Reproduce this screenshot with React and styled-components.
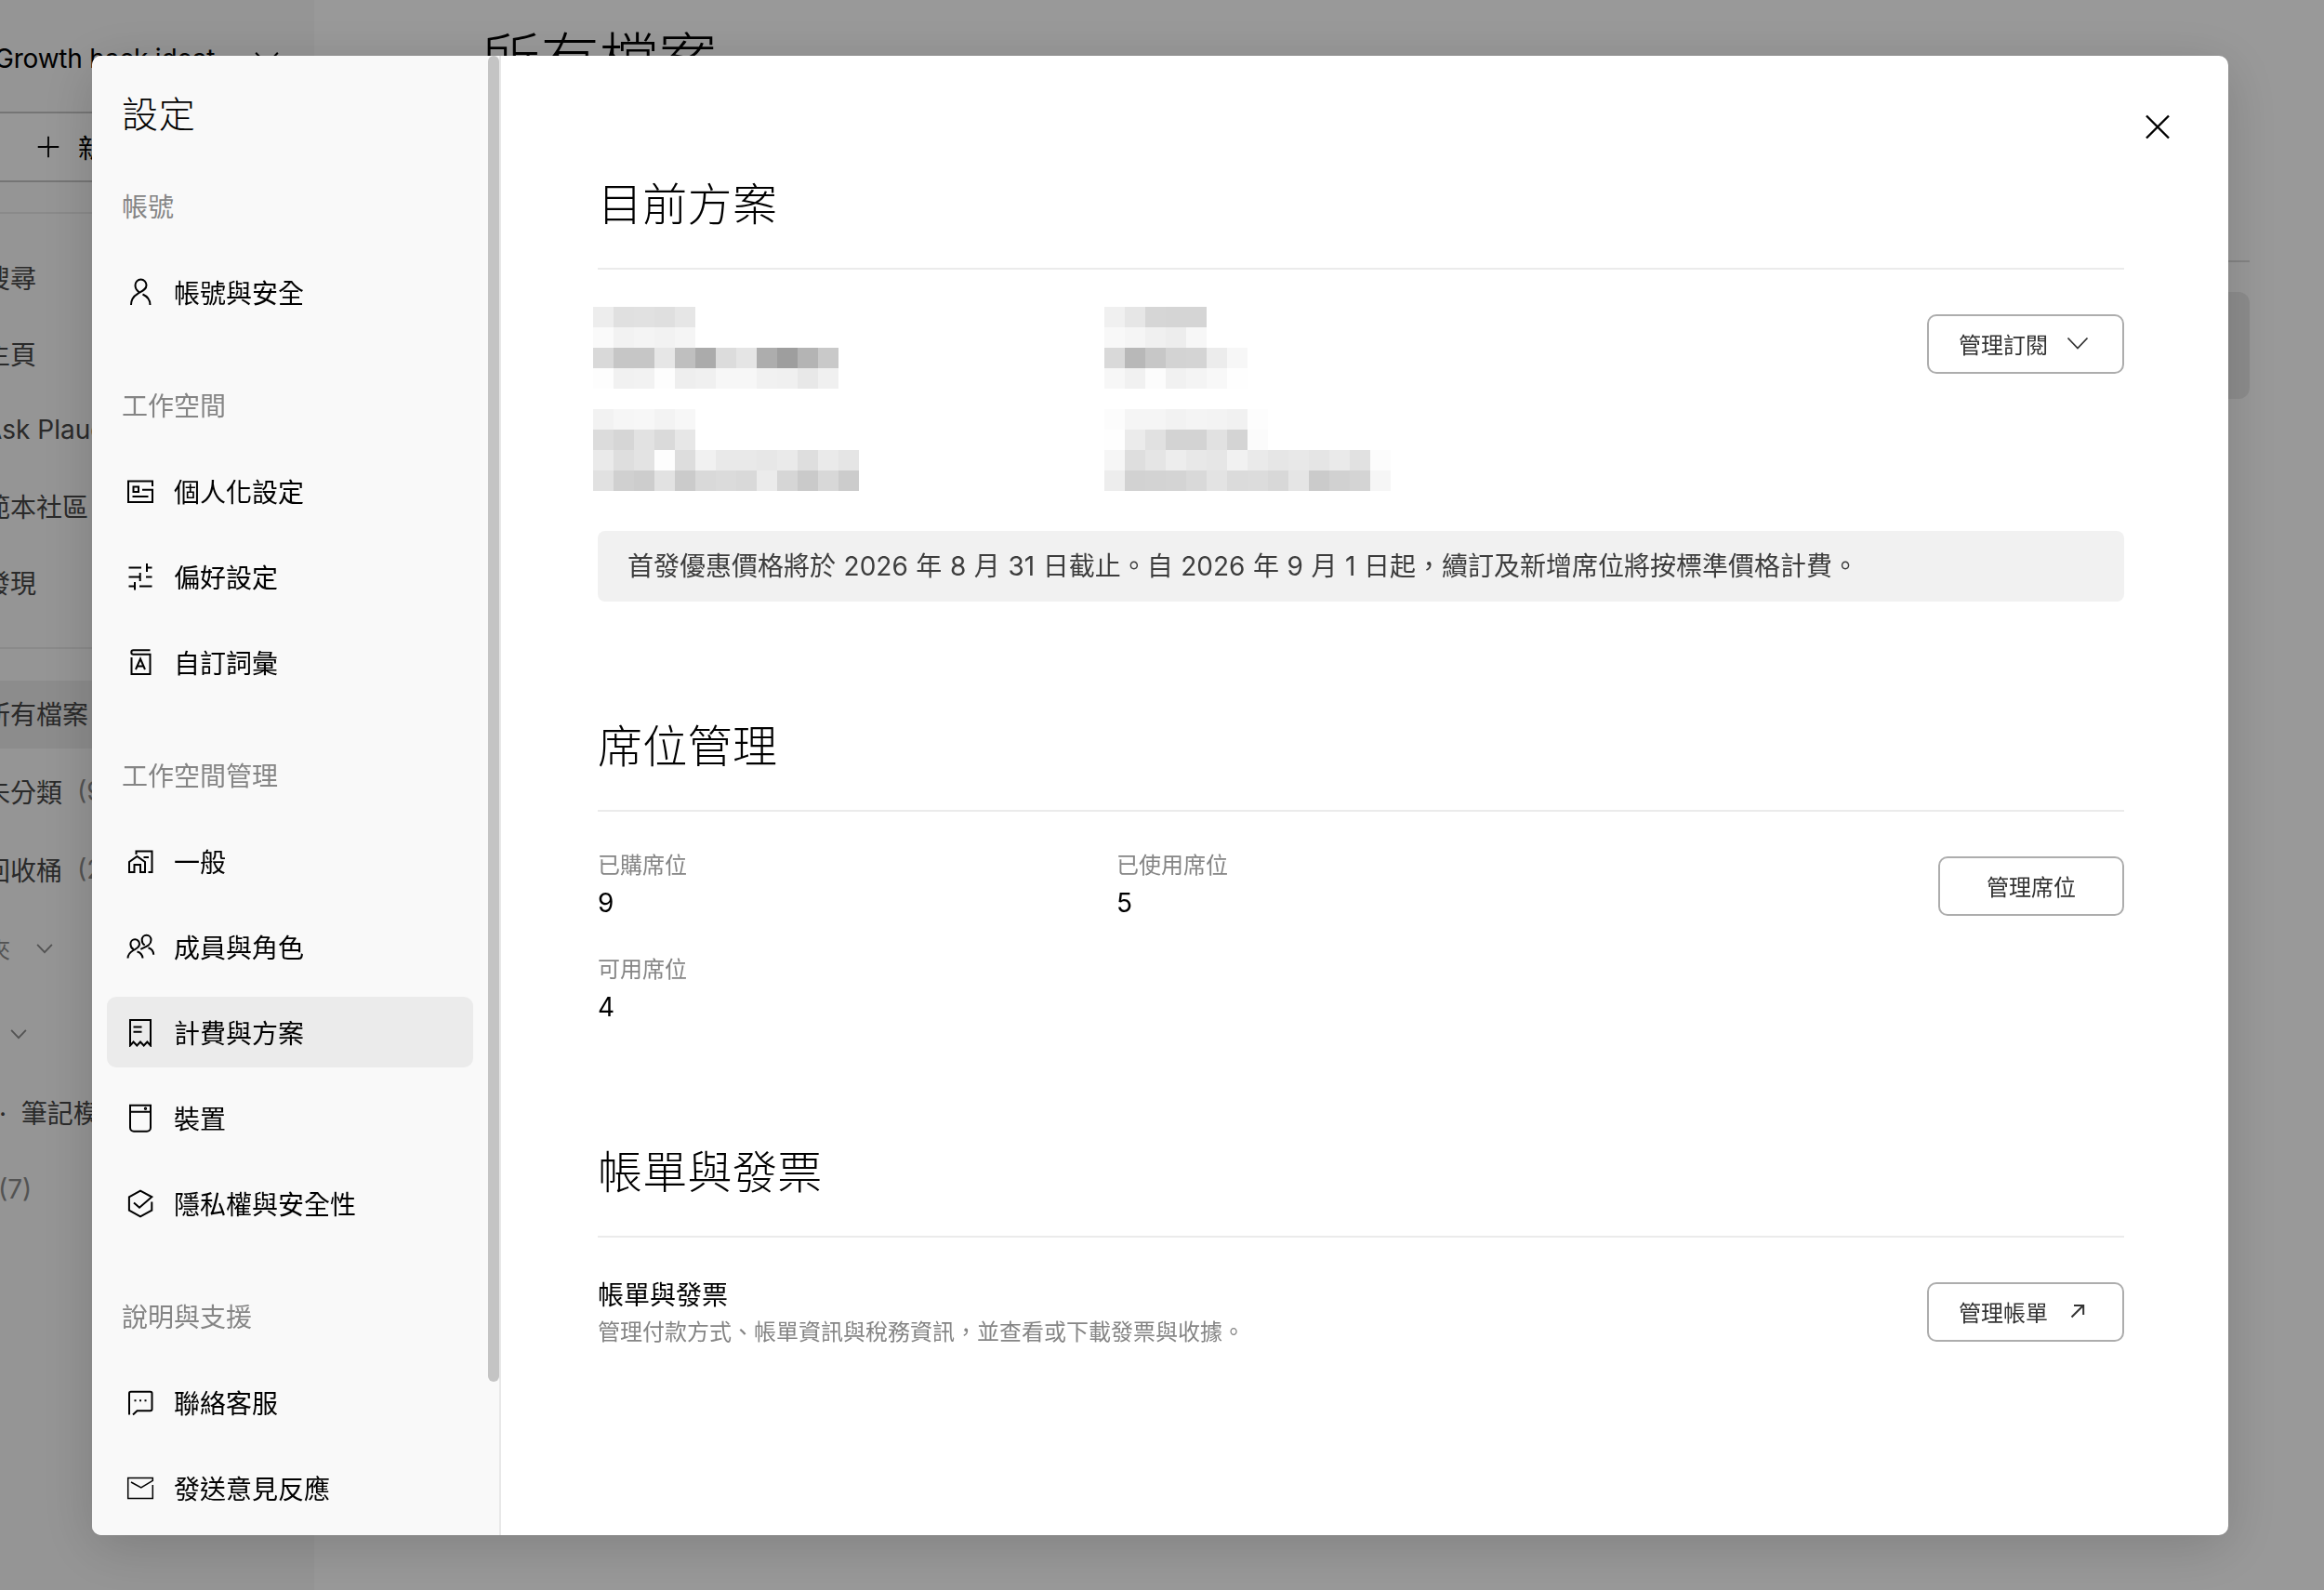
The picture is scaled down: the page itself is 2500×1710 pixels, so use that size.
import React, { useState } from "react";
import styled, { createGlobalStyle } from "styled-components";

const GlobalStyle = createGlobalStyle`
  * {
    box-sizing: border-box;
  }
  body {
    margin: 0;
    background: #fff;
    color: #000;
    font-family: Inter, "Noto Sans CJK TC", sans-serif;
    font-size: 28px;
    -webkit-font-smoothing: antialiased;
  }
`;

/* ---------- page behind the dialog ---------- */

const Page = styled.div`
  display: flex;
  width: 2500px;
  height: 1710px;
  overflow: hidden;
`;

const PageSidebar = styled.aside`
  flex: none;
  width: 380px;
  margin-left: -42px;
  background: #f8f8f8;
`;

const Workspace = styled.div`
  display: flex;
  align-items: center;
  justify-content: space-between;
  height: 120px;
  padding: 5px 33px 0 36px;
  letter-spacing: -0.2px;
`;

const NewButton = styled.div`
  display: flex;
  align-items: center;
  gap: 20px;
  height: 76px;
  margin-right: 40px;
  padding-left: 80px;
  border: 2px solid #c4c4c4;
  background: #fcfcfc;
`;

const PageNav = styled.nav`
  display: flex;
  flex-direction: column;
  margin-top: ${(props) => props.$top}px;
  padding-top: ${(props) => props.$pad}px;
  border-top: 2px solid #e6e6e6;
`;

const PageLink = styled.div`
  display: flex;
  align-items: center;
  flex: none;
  gap: ${(props) => props.$gap ?? 18}px;
  height: ${(props) => props.$height || 82}px;
  padding-bottom: 3px;
  padding-left: ${(props) => props.$indent ?? 25}px;
  background: ${(props) => (props.$active ? "#e9e9e9" : "none")};
  color: ${(props) => (props.$muted ? "#8a8a8a" : "#474747")};
  font-size: ${(props) => props.$size || 28}px;
  white-space: pre;
`;

const Count = styled.span`
  color: #8a8a8a;
`;

const PageMain = styled.main`
  flex: 1;
  padding: 16px 80px 0 180px;
`;

const PageTitle = styled.h1`
  margin: 0;
  height: 266px;
  border-bottom: 2px solid #dcdcdc;
  font-size: 63px;
  font-weight: 300;
  letter-spacing: 0.4px;
  line-height: 96px;
`;

const FileRow = styled.div`
  height: 115px;
  margin-top: 32px;
  border-radius: 12px;
  background: #ebebeb;
`;

/* ---------- dialog ---------- */

const Overlay = styled.div`
  position: fixed;
  inset: 0;
  padding: 60px 0 0 99px;
  background: rgba(0, 0, 0, 0.4);
`;

const Dialog = styled.div`
  display: flex;
  width: 2298px;
  height: 1591px;
  overflow: hidden;
  border-radius: 10px;
  background: #fff;
  box-shadow: 0 12px 60px rgba(0, 0, 0, 0.17);
`;

const Sidebar = styled.aside`
  display: flex;
  flex: none;
  width: 440px;
  border-right: 2px solid #e8e8e8;
  background: #f9f9f9;
`;

const SidebarScroll = styled.div`
  flex: 1;
  padding: 24px 16px 0;
`;

const ScrollThumb = styled.div`
  width: 12px;
  height: 1426px;
  border-radius: 6px;
  background: #c4c4c4;
`;

const SidebarTitle = styled.h2`
  height: 76px;
  margin: 0 0 24px;
  padding-left: 16px;
  font-size: 39px;
  font-weight: 300;
  letter-spacing: 0.7px;
  line-height: 77px;
`;

const Group = styled.div`
  display: flex;
  flex-direction: column;
  gap: 16px;
  margin-bottom: 46px;
`;

const GroupLabel = styled.div`
  height: 76px;
  padding-left: 16px;
  color: #858585;
  line-height: 79px;
`;

const Item = styled.div`
  display: flex;
  align-items: center;
  gap: 20px;
  height: 76px;
  padding-left: 20px;
  border-radius: 10px;
  background: ${(props) => (props.$active ? "#ebebeb" : "none")};
  cursor: pointer;
`;

const Content = styled.section`
  flex: 1;
  padding: 0 112px 0 104px;
`;

const TopBar = styled.div`
  display: flex;
  justify-content: flex-end;
  height: 127px;
  margin-right: -52px;
  padding-top: 60px;
`;

const CloseButton = styled.button`
  width: 32px;
  height: 32px;
  padding: 0;
  border: 0;
  background: none;
`;

const Section = styled.div`
  margin-bottom: 123px;
`;

const SectionTitle = styled.h3`
  margin: 0;
  height: 103px;
  border-bottom: 2px solid #ebebeb;
  font-size: 48px;
  font-weight: 300;
  letter-spacing: 0.3px;
  line-height: 66px;
`;

const SectionBody = styled.div`
  display: flex;
  align-items: flex-start;
  justify-content: space-between;
  padding-top: 40px;
`;

const Button = styled.button`
  display: flex;
  flex: none;
  align-items: center;
  justify-content: center;
  gap: 16px;
  min-width: 200px;
  height: 64px;
  margin-top: 8px;
  padding: 0 32px 2px;
  border: 2px solid #adadad;
  border-radius: 10px;
  background: #fff;
  color: #333;
  font: inherit;
  font-size: 24px;
`;

const Fields = styled.div`
  display: grid;
  grid-template-columns: 558px 558px;
  row-gap: 32px;
`;

const Label = styled.div`
  color: #858585;
  font-size: 24px;
  line-height: 36px;
`;

const Value = styled.div`
  line-height: 44px;
`;

const Masked = styled.div`
  display: grid;
  grid-template-columns: 550px 550px;
  margin-left: -5px;
`;

const Mosaic = styled.div`
  display: flex;
  flex-direction: column;
`;

const MosaicRow = styled.div`
  display: flex;
  height: 22px;
`;

const Cell = styled.div`
  width: 22px;
  height: 22px;
`;

const Notice = styled.div`
  height: 76px;
  margin-top: 43px;
  padding-left: 32px;
  border-radius: 8px;
  background: #f1f1f1;
  color: #3d3d3d;
  line-height: 77px;
  word-spacing: 0.7px;
  white-space: nowrap;
`;

const Svg = styled.svg`
  flex: none;
  display: block;
  fill: none;
  stroke: currentColor;
  stroke-width: ${(props) => props.$stroke || 2};
`;

const Icon = ({ children, size = 32, stroke }) => (
  <Svg width={size} height={size} viewBox="0 0 32 32" $stroke={stroke}>
    {children}
  </Svg>
);

const Chevron = ({ size, stroke = 1.8 }) => (
  <Icon size={size} stroke={stroke}>
    <path d="M5.5 10.5 16 21.5 26.5 10.5" />
  </Icon>
);

const icons = {
  user: (
    <>
      <path d="M6 30c0-6 2.6-9.5 7.2-12.2C18 15 22.5 13.5 22.5 8.8a6 6.3 0 0 0-12 0c0 3.3 1.3 5.5 4 7.2" />
      <path d="M18.5 18.5c5 2.2 8 5.5 8 11.5" />
    </>
  ),
  card: (
    <>
      <path d="M29 11V5.5H3v22.5h26V14.7H18" />
      <path d="M8.5 11.5h5.5v5.5H8.5zM7.5 22h17" />
    </>
  ),
  sliders: (
    <path d="M3.5 6.5H17M23 2v9M23 6.5h5.5M3.5 16.5h12.2M15.7 12v9M22 16.5h6.5M3.5 26.5H10M10 22v8.5M15 26.5h13.5" />
  ),
  glossary: (
    <>
      <path d="M26.5 3.3H8.5a2.2 2.2 0 0 0 0 4.4h18V29H6.5V11" />
      <path d="m11 24 5-11.5L21 24M12.7 20.5h6.6" />
    </>
  ),
  home: (
    <>
      <path d="M11.5 9V5.5h17V28H24.5M19.5 12h5.5" />
      <path d="M8.5 28H4V17l8.5-6 8.5 6v11h-5v-8H9.5v8z" />
    </>
  ),
  members: (
    <>
      <path d="M2.5 28.5c0-4.3 2.5-6.5 6-8.5 3.5-1.9 6.5-3 6.5-6.7a4.8 5 0 0 0-9.6 0c0 2.6 1 4.6 3.2 5.7" />
      <path d="M12.5 21.5c3.6.9 5.6 3 6 7" />
      <path d="M16.3 18.8C21 16.5 27.5 15 27.5 9a4.9 5.3 0 0 0-9.8 0c0 2.5 1 4.3 3 5.5M24.5 17.3c3.6 1 5.5 3.5 5.7 7.5" />
    </>
  ),
  receipt: (
    <path d="M5 30.5V3h22v27.5l-3.6-4-3.7 4-3.7-4-3.7 4-3.7-4zM8.5 10.5h9M8.5 15.7h9" />
  ),
  device: (
    <>
      <path d="M5 2.7h22v24a4 4 0 0 1-4 4H9a4 4 0 0 1-4-4zM5 9.7h22" />
      <circle cx="21.5" cy="6.3" r="0.7" />
    </>
  ),
  shield: <path d="M28.3 14.5v9.2L16 30.3 3.9 23.7V9.3L16 2.7l12.3 6.6L15 20.7l-6-5.2" />,
  chat: (
    <>
      <path d="M4 29.5V6.5a1.8 1.8 0 0 1 1.8-1.8h20.9a1.8 1.8 0 0 1 1.8 1.8v17a1.8 1.8 0 0 1-1.8 1.8H12.5L8 29.5" />
      <path d="M9.5 14.2h2M15 14.2h2M20.5 14.2h2" />
    </>
  ),
  mail: <path d="m6 10 10.8 6L29.3 8.3V5.6H2.7v22h26.6V13" strokeWidth="1.5" />,
};

const groups = [
  { label: "帳號", items: [["user", "帳號與安全"]] },
  {
    label: "工作空間",
    items: [
      ["card", "個人化設定"],
      ["sliders", "偏好設定"],
      ["glossary", "自訂詞彙"],
    ],
  },
  {
    label: "工作空間管理",
    items: [
      ["home", "一般"],
      ["members", "成員與角色"],
      ["receipt", "計費與方案"],
      ["device", "裝置"],
      ["shield", "隱私權與安全性"],
    ],
  },
  {
    label: "說明與支援",
    items: [
      ["chat", "聯絡客服"],
      ["mail", "發送意見反應"],
    ],
  },
];

// grey level of every masked block, one string per row
const maskedPlan = [
  "ed e0 e1 df e6",
  "fa f2 f4 f2 f5",
  "d9 c6 c6 e6 bf ab dc e5 ad 9e b4 c9",
  "fd f1 f2 fd ee f0 f7 f7 f1 f0 e8 f0",
  "",
  "f2 f6 f7 f3 f7",
  "dc d6 e2 da e7",
  "ea de e3 fd dd f1 e9 e9 e7 ea de ea e5",
  "e1 d0 cd e2 cb d9 db d9 eb d6 ca d8 cc",
];
const maskedRenewal = [
  "f0 e6 d6 d5 d5",
  "f8 f5 f0 ed f7",
  "d9 b8 c7 d3 d4 ec f7",
  "f7 f1 fc f1 f4 f8 fe",
  "",
  "fc f5 f5 f2 f4 f3 f1 fd",
  "fe eb e1 d3 d3 e1 d4 fb",
  "f6 de e5 ed e8 e6 f1 ea e6 e8 e5 ea e1 fc",
  "ed d2 d3 d4 d9 e3 db dc d8 e5 cb d1 d4 f6",
];

const MaskedBlock = ({ rows }) => (
  <Mosaic>
    {rows.map((row, i) => (
      <MosaicRow key={i}>
        {row
          .split(" ")
          .filter(Boolean)
          .map((c, j) => (
            <Cell key={j} style={{ background: `#${c}${c}${c}` }} />
          ))}
      </MosaicRow>
    ))}
  </Mosaic>
);

const Field = ({ label, value }) => (
  <div>
    <Label>{label}</Label>
    <Value>{value}</Value>
  </div>
);

const FilesPage = () => (
  <Page>
    <PageSidebar>
      <Workspace>
        <span>Growth hack ideat...</span>
        <Chevron size={36} />
      </Workspace>
      <NewButton>
        <Icon size={24} stroke={2.4}>
          <path d="M16 1v12q0 3-3 3H1M16 31V19q0-3 3-3h12" />
        </Icon>
        新增
      </NewButton>
      <PageNav $top={32} $pad={28}>
        <PageLink>搜尋</PageLink>
        <PageLink>主頁</PageLink>
        <PageLink>Ask Plaud</PageLink>
        <PageLink>範本社區</PageLink>
        <PageLink>發現</PageLink>
      </PageNav>
      <PageNav $top={28} $pad={34}>
        <PageLink $active $height={73}>所有檔案</PageLink>
        <PageLink $height={94} $gap={16}>
          未分類<Count>(9)</Count>
        </PageLink>
        <PageLink $height={74} $gap={16}>
          回收桶<Count>(2)</Count>
        </PageLink>
        <PageLink $muted $height={96} $size={24} $indent={5} $gap={25}>
          料夾
          <Chevron size={24} stroke={2.4} />
        </PageLink>
        <PageLink $muted $height={88} $indent={50}>
          <Chevron size={24} stroke={2.4} />
        </PageLink>
        <PageLink $height={80} $indent={41}>·  筆記模板</PageLink>
        <PageLink $muted $height={86} $indent={40}>(7)</PageLink>
      </PageNav>
    </PageSidebar>
    <PageMain>
      <PageTitle>所有檔案</PageTitle>
      <FileRow />
    </PageMain>
  </Page>
);

const SettingsSidebar = () => {
  const [active, setActive] = useState("計費與方案");

  return (
    <Sidebar>
      <SidebarScroll>
        <SidebarTitle>設定</SidebarTitle>
        {groups.map((group) => (
          <Group key={group.label}>
            <GroupLabel>{group.label}</GroupLabel>
            {group.items.map(([icon, name]) => (
              <Item key={name} $active={active === name} onClick={() => setActive(name)}>
                <Icon>{icons[icon]}</Icon>
                {name}
              </Item>
            ))}
          </Group>
        ))}
      </SidebarScroll>
      <ScrollThumb />
    </Sidebar>
  );
};

export default function App() {
  return (
    <div lang="zh-TW">
      <GlobalStyle />
      <FilesPage />
      <Overlay>
        <Dialog>
          <SettingsSidebar />
          <Content>
            <TopBar>
              <CloseButton aria-label="關閉">
                <Icon stroke={2.4}>
                  <path d="M4 4.5 28 28.5M28 4.5 4 28.5" />
                </Icon>
              </CloseButton>
            </TopBar>

            <Section>
              <SectionTitle>目前方案</SectionTitle>
              <SectionBody>
                <Masked>
                  <MaskedBlock rows={maskedPlan} />
                  <MaskedBlock rows={maskedRenewal} />
                </Masked>
                <Button>
                  管理訂閱
                  <Chevron />
                </Button>
              </SectionBody>
              <Notice>
                首發優惠價格將於 2026 年 8 月 31 日截止。自 2026 年 9 月 1 日起，續訂及新增席位將按標準價格計費。
              </Notice>
            </Section>

            <Section>
              <SectionTitle>席位管理</SectionTitle>
              <SectionBody>
                <Fields>
                  <Field label="已購席位" value="9" />
                  <Field label="已使用席位" value="5" />
                  <Field label="可用席位" value="4" />
                </Fields>
                <Button>管理席位</Button>
              </SectionBody>
            </Section>

            <Section>
              <SectionTitle>帳單與發票</SectionTitle>
              <SectionBody>
                <div>
                  <Value>帳單與發票</Value>
                  <Label>管理付款方式、帳單資訊與稅務資訊，並查看或下載發票與收據。</Label>
                </div>
                <Button>
                  管理帳單
                  <Icon>
                    <path d="M9.5 22.5 22 10M12 10h10.2v10" />
                  </Icon>
                </Button>
              </SectionBody>
            </Section>
          </Content>
        </Dialog>
      </Overlay>
    </div>
  );
}
